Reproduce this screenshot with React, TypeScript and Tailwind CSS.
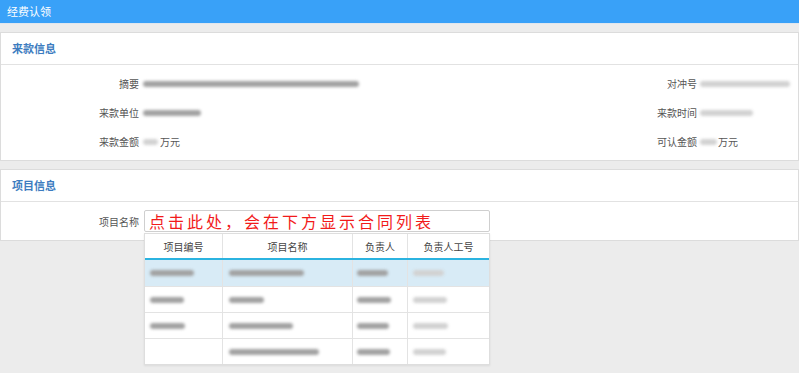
import React from "react";

const Blur = ({ w, tone = "dark", className = "" }: { w: number; tone?: "dark" | "light"; className?: string }) => (
  <span
    className={`inline-block h-[6px] rounded-sm blur-[1.5px] align-middle ${tone === "dark" ? "bg-[#a2a2a2]" : "bg-[#d2d2d2]"} ${className}`}
    style={{ width: w }}
  />
);

const font = { fontFamily: '"Noto Sans CJK SC", "Noto Sans", sans-serif' };

function InfoRow({ left, lv, right, rv }: { left: string; lv: React.ReactNode; right: string; rv: React.ReactNode }) {
  return (
    <div className="flex h-[29px] items-center">
      <div className="flex flex-1 items-center">
        <span className="w-[138px] text-right text-[10px] text-[#555]">{left}</span>
        <span className="ml-[4px] flex items-center">{lv}</span>
      </div>
      <div className="flex w-[199px] items-center">
        <span className="w-[98px] text-right text-[10px] text-[#555]">{right}</span>
        <span className="ml-[3px] flex items-center">{rv}</span>
      </div>
    </div>
  );
}

const rows = [
  { a: 44, b: 75, c: 31, d: 31, hl: true },
  { a: 34, b: 35, c: 34, d: 34 },
  { a: 35, b: 64, c: 32, d: 35 },
  { a: 0, b: 90, c: 33, d: 33 },
];

export default function App() {
  return (
    <div className="h-[373px] w-[799px] overflow-hidden bg-[#ececec]" style={font}>
      <div className="flex h-[23px] items-center bg-[#39a1f8] pl-[7px] text-[11px] text-white">经费认领</div>
      <div className="h-px bg-[#dfe6ee]" />
      <div className="pt-[8px]">
        <div className="border border-[#dcdcdc] bg-white">
          <div className="flex h-[32px] items-center border-b border-[#e2e2e2] pl-[11px] text-[11px] font-bold text-[#3d7cc0]">来款信息</div>
          <div className="pb-[4px] pt-[4px]">
            <InfoRow left="摘要" lv={<Blur w={216} />} right="对冲号" rv={<Blur w={90} tone="light" />} />
            <InfoRow left="来款单位" lv={<Blur w={58} />} right="来款时间" rv={<Blur w={53} tone="light" />} />
            <InfoRow
              left="来款金额"
              lv={<><Blur w={15} tone="light" /><span className="ml-[2px] text-[10px] text-[#555]">万元</span></>}
              right="可认金额"
              rv={<><Blur w={17} tone="light" /><span className="ml-[1px] text-[10px] text-[#555]">万元</span></>}
            />
          </div>
        </div>
        <div className="mt-[8px] border border-[#dcdcdc] bg-white">
          <div className="flex h-[32px] items-center border-b border-[#e2e2e2] pl-[11px] text-[11px] font-bold text-[#3d7cc0]">项目信息</div>
          <div className="flex h-[38px] items-center">
            <span className="w-[138px] text-right text-[10px] text-[#555]">项目名称</span>
            <div className="relative ml-[5px]">
              <div className="flex h-[22px] w-[346px] items-center rounded-[2px] border border-[#cfcfcf] pl-[4px] text-[16px] tracking-[3px] text-[#f21b1b]">
                点击此处，会在下方显示合同列表
              </div>
              <div className="absolute left-0 top-[23px] z-10 w-[346px] border border-[#dedede] bg-white shadow-[0_1px_2px_rgba(0,0,0,0.08)]">
                <div className="grid h-[26px] grid-cols-[78px_130px_55px_1fr] border-b-2 border-[#2bb3e0] text-[10px] text-[#444]">
                  <div className="flex items-center justify-center border-r border-[#e3e3e3]">项目编号</div>
                  <div className="flex items-center justify-center border-r border-[#e3e3e3]">项目名称</div>
                  <div className="flex items-center justify-center border-r border-[#e3e3e3]">负责人</div>
                  <div className="flex items-center justify-center">负责人工号</div>
                </div>
                {rows.map((r, i) => (
                  <div
                    key={i}
                    className={`grid h-[26px] grid-cols-[78px_130px_55px_1fr] ${i > 0 ? "border-t border-[#e3e3e3]" : ""} ${r.hl ? "bg-[#d8ebf6]" : ""}`}
                  >
                    <div className="flex items-center border-r border-[#e3e3e3] pl-[5px]">{r.a > 0 && <Blur w={r.a} />}</div>
                    <div className="flex items-center border-r border-[#e3e3e3] pl-[6px]"><Blur w={r.b} /></div>
                    <div className="flex items-center border-r border-[#e3e3e3] pl-[4px]"><Blur w={r.c} /></div>
                    <div className="flex items-center pl-[5px]"><Blur w={r.d} tone="light" /></div>
                  </div>
                ))}
              </div>
            </div>
          </div>
        </div>
      </div>
    </div>
  );
}
